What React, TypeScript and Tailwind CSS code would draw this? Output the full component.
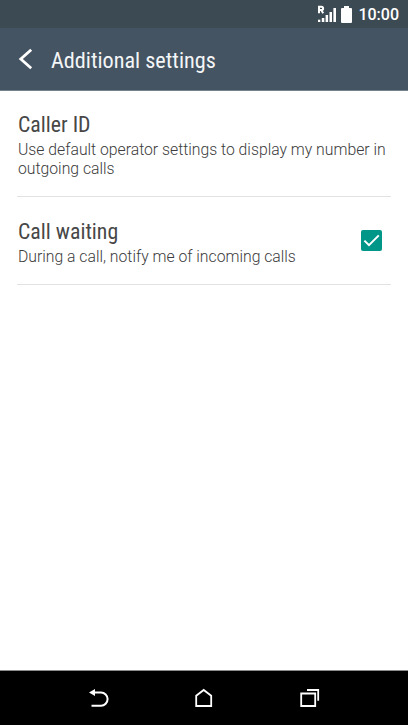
import React from 'react';

interface SettingRowProps {
  title: string;
  description: string;
  checked?: boolean;
}

const StatusBar: React.FC = () => (
  <div className="flex h-7 items-center justify-end bg-[#3c4a54] pr-[9px] text-white">
    <svg width="19" height="18" viewBox="0 0 19 18" fill="currentColor" className="mr-[5px]">
      <path d="M2 8.2V1.7h2.4a1.6 1.6 0 0 1 0 3.4H2M4.2 5l2 3.2" fill="none" stroke="currentColor" strokeWidth="2" />
      <rect x="1" y="14.7" width="2.3" height="2.3" />
      <rect x="4.8" y="13" width="2.5" height="4" />
      <rect x="8.6" y="10" width="2.5" height="7" />
      <rect x="12.5" y="7" width="2.5" height="10" />
      <rect x="16.4" y="3" width="2.6" height="14" />
    </svg>
    <svg width="11" height="17" viewBox="0 0 11 17" fill="currentColor" className="mr-[6px]">
      <path d="M3 0h5v2h2a1 1 0 0 1 1 1v13a1 1 0 0 1-1 1H1a1 1 0 0 1-1-1V3a1 1 0 0 1 1-1h2z" />
    </svg>
    <span className="mt-[2px] text-[16px] leading-5 font-medium">10:00</span>
  </div>
);

const Header: React.FC = () => (
  <header className="flex h-[63px] items-center border-b border-[#74808a] bg-[#445462] text-white">
    <button type="button" aria-label="Back" className="ml-[18px]">
      <svg width="15" height="22" viewBox="0 0 15 22" fill="none" stroke="currentColor" strokeWidth="2.8">
        <path d="M13.2 1.7L2.8 11l10.4 9.3" />
      </svg>
    </button>
    <h1 className="mt-[2px] ml-[18px] font-['Roboto_Condensed'] text-[22.2px] leading-7 font-normal text-[#f4f6f7]">Additional settings</h1>
  </header>
);

const Checkbox: React.FC = () => (
  <div role="checkbox" aria-checked="true" className="mr-[9px] mb-[2px] h-[21px] w-[21px] shrink-0 rounded-[2px] bg-[#009688] text-white">
    <svg width="21" height="21" viewBox="0 0 21 21" fill="none" stroke="currentColor" strokeWidth="2">
      <path d="M3.4 10.6l4.6 4.6L17.8 5.4" />
    </svg>
  </div>
);

const SettingRow: React.FC<SettingRowProps> = ({ title, description, checked }) => (
  <div className="mx-[17px] flex justify-between border-b border-[#e2e2e2] pt-[19px] pb-[18px] pl-px last:pt-5">
    <div>
      <h2 className="mb-px font-['Roboto_Condensed'] text-[21.8px] leading-[29px] font-normal text-[#474747]">{title}</h2>
      <p className="text-[15.75px] leading-[19px] font-light text-[#3c3c3c]">{description}</p>
    </div>
    {checked && (
      <div className="flex items-center">
        <Checkbox />
      </div>
    )}
  </div>
);

const NavBar: React.FC = () => (
  <nav className="flex h-[55px] items-center justify-between border-t border-[#8c8c8c] bg-black px-[88px] text-white">
    <svg width="21" height="20" viewBox="0 0 21 20" fill="none" stroke="currentColor" strokeWidth="2">
      <path d="M6 4.5h7a6.6 6.6 0 0 1 0 13.2H3.5" />
      <path d="M1 4.5L7 1v7z" fill="currentColor" stroke="none" />
    </svg>
    <svg width="18" height="20" viewBox="0 0 18 20" fill="none" stroke="currentColor" strokeWidth="1.8" className="mr-px">
      <path d="M1.2 18V7.8L8.7 2l7.5 5.8V18z" />
    </svg>
    <svg width="20" height="20" viewBox="0 0 20 20" fill="none" stroke="currentColor" strokeWidth="1.8">
      <path d="M1.2 5.5h14V18h-14zM7 2h11.2v10.8" />
    </svg>
  </nav>
);

const App: React.FC = () => (
  <div className="flex h-[725px] w-[408px] flex-col bg-white font-['Roboto',sans-serif]">
    <StatusBar />
    <Header />
    <main className="flex-1">
      <SettingRow title="Caller ID" description="Use default operator settings to display my number in outgoing calls" />
      <SettingRow title="Call waiting" description="During a call, notify me of incoming calls" checked />
    </main>
    <NavBar />
  </div>
);

export default App;
